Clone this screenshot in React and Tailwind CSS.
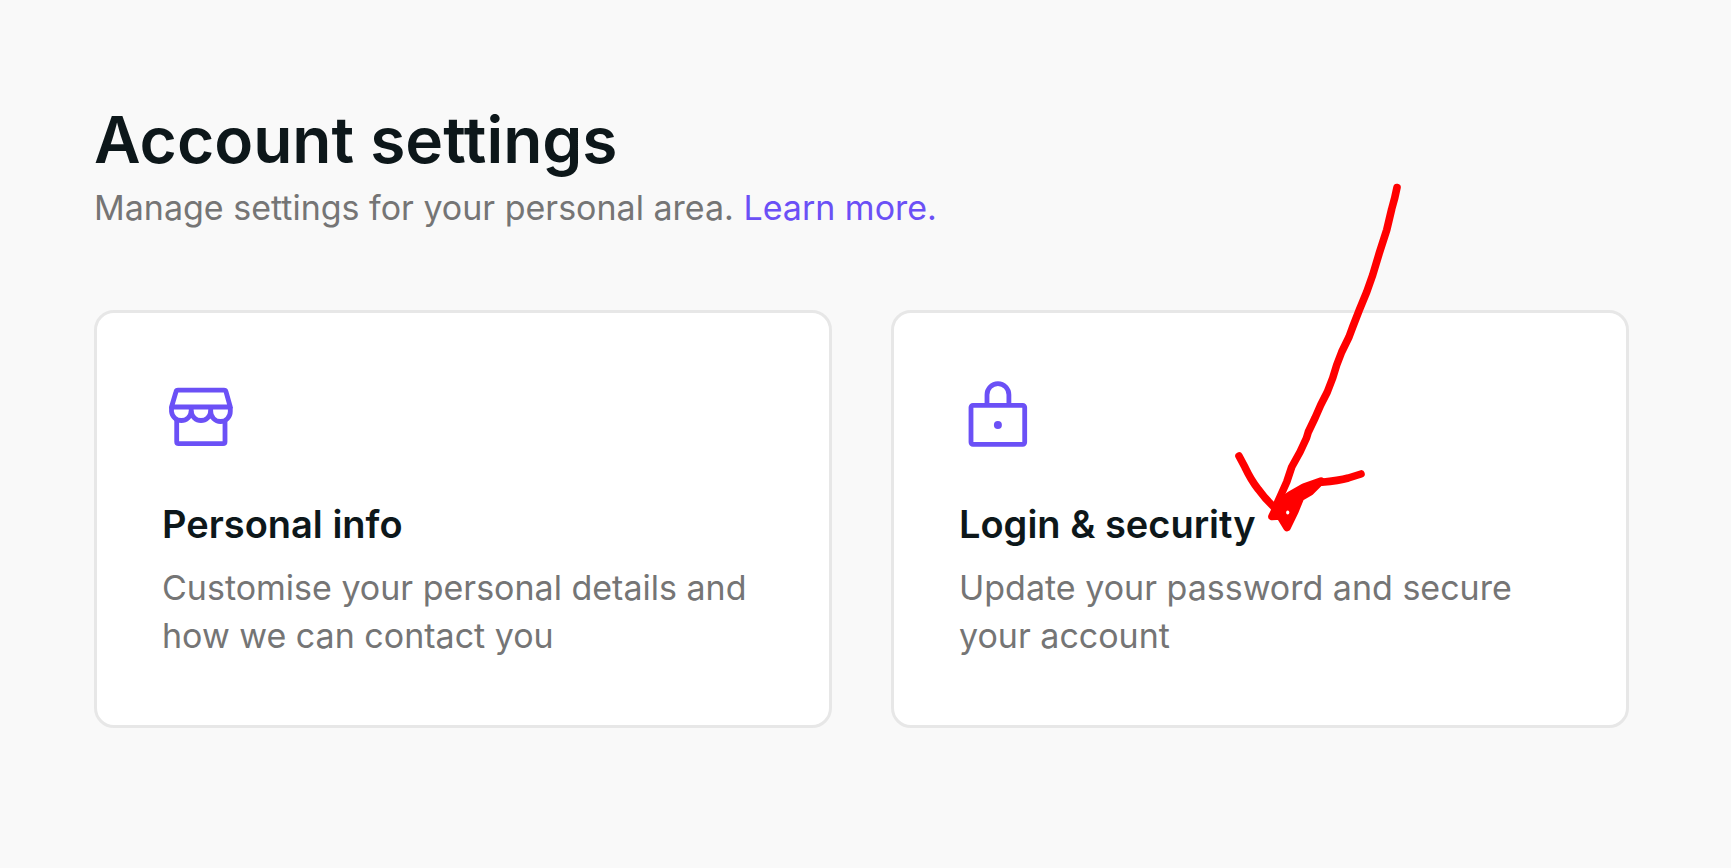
import React from 'react';

function StoreIcon() {
  return (
    <svg
      className="w-[76px] h-[76px] text-[#6b50f6]"
      viewBox="0 0 76 76"
      fill="none"
      stroke="currentColor"
      strokeWidth="4.8"
      strokeLinejoin="round"
      aria-hidden="true"
    >
      <path d="M9.5 29 L14 13.7 Q14.4 12.2 16 12.2 H62 Q63.6 12.2 64 13.7 L68.3 29 Z" />
      <path d="M9.5 29 V33.5 A9.9 10 0 0 0 29.2 33.5 A9.8 10 0 0 0 48.7 33.5 A9.8 10 0 0 0 68.3 33.5 V29" />
      <path d="M29.2 29 V34 M48.7 29 V34" />
      <path d="M14.7 42 V63.7 Q14.7 65.7 16.7 65.7 H61 Q63 65.7 63 63.7 V42" />
    </svg>
  );
}

function LockIcon() {
  return (
    <svg
      className="w-[76px] h-[76px] text-[#6b50f6]"
      viewBox="0 0 76 76"
      fill="none"
      stroke="currentColor"
      strokeWidth="4.8"
      strokeLinejoin="round"
      aria-hidden="true"
    >
      <rect x="12" y="27.3" width="53.7" height="39" rx="2" />
      <path d="M28 27.3 V16.7 A10.9 11 0 0 1 49.9 16.7 V27.3" />
      <circle cx="38.9" cy="47" r="4" fill="currentColor" stroke="none" />
    </svg>
  );
}

// Hand-drawn arrow pointing at the card title
function ArrowMark() {
  return (
    <svg
      className="absolute -top-[135px] left-[337px] w-[180px] h-[360px] pointer-events-none"
      viewBox="0 0 180 360"
      fill="none"
      stroke="#ff0000"
      strokeWidth="7.6"
      strokeLinecap="round"
      strokeLinejoin="round"
      aria-hidden="true"
    >
      <path d="M166 9.5 Q164 20 160.7 31 L155.7 52 L148.3 75 L141.7 97 L135.7 114 L128.3 132 L121.7 149 L118 159 L110.7 174 L105.7 187 L101.7 200 L96.3 214 L89.7 227 L84 240 L77.3 254 L75.5 260 L69 274 L60.7 289 L55.7 304 L49 319 L44 330" />
      <path d="M8 278 L14 289.3 Q20 302 27.3 311.3 Q35 322 44 330" />
      <path d="M130 296 L117.3 300 Q108 302.5 90.7 304.3" />
      <path
        d="M90 303 L73 309 L59 317 L47 326 L41 338.5 L49 338 L56 349.5 L64 333 L69.5 319.5 L79 314 Z"
        fill="#ff0000"
      />
      <ellipse cx="56.7" cy="334.5" rx="1.6" ry="2" fill="#ffffff" stroke="none" />
    </svg>
  );
}

const CARDS = [
  {
    id: 'personal',
    title: 'Personal info',
    text: 'Customise your personal details and how we can contact you',
    icon: StoreIcon,
  },
  {
    id: 'security',
    title: 'Login & security',
    text: 'Update your password and secure your account',
    icon: LockIcon,
    marked: true,
  },
];

function SettingsCard({ item }) {
  const Icon = item.icon;
  return (
    <a
      href={`#${item.id}`}
      className="relative block rounded-[20px] border-[3px] border-[#e7e7e7] bg-white p-[65px]"
    >
      <Icon />
      <h2 className="mt-[42px] text-[38px] leading-[56px] font-semibold text-[#0d171a]">{item.title}</h2>
      <p className="mt-3 text-[34px] leading-[48px] text-[#757575]">{item.text}</p>
      {item.marked && <ArrowMark />}
    </a>
  );
}

export default function App() {
  return (
    <div className="min-h-screen bg-[#f9f9f9] font-['Inter',sans-serif]">
      <main className="pt-[100px] pb-[140px] pl-[94px] pr-[102px]">
        <h1 className="text-[64px] leading-[80px] font-semibold text-[#0d171a]">Account settings</h1>
        <p className="mt-1 text-[34px] leading-[48px] text-[#757575]">
          Manage settings for your personal area.{' '}
          <a href="#learn" className="text-[#6b50f6]">Learn more.</a>
        </p>
        <div className="mt-[78px] grid grid-cols-2 gap-[59px]">
          {CARDS.map((item) => (
            <SettingsCard key={item.id} item={item} />
          ))}
        </div>
      </main>
    </div>
  );
}
